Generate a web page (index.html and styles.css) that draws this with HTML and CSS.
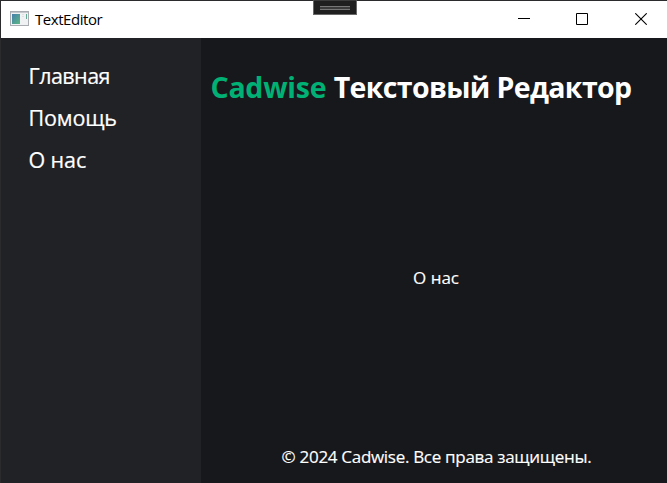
FILE: index.html
```
<!DOCTYPE html>
<html lang="ru">
<head>
<meta charset="utf-8">
<title>TextEditor</title>
<link rel="stylesheet" href="styles.css">
</head>
<body>
<div class="window">
  <header class="titlebar">
    <svg class="app-icon" width="20" height="16" viewBox="0 0 20 16">
      <defs><linearGradient id="g" x1="0" y1="0" x2="1" y2="1"><stop offset="0" stop-color="#477fae"/><stop offset="1" stop-color="#5bb880"/></linearGradient></defs>
      <rect x=".5" y=".5" width="18" height="14" fill="#f0f1f3" stroke="#a9adb2"/>
      <path d="M1 1.5h17" stroke="#c5c9ce"/>
      <rect x="2" y="3" width="8" height="10" fill="url(#g)"/>
      <path d="M12 3.5h2M12 5.5h2" stroke="#dfe2e5"/>
      <rect x="16" y="3" width="1" height="5" fill="#66a995"/>
    </svg>
    <span class="app-name">TextEditor</span>
    <div class="controls">
      <svg width="12" height="12" viewBox="0 0 12 12"><path d="M0 5.5h12"/></svg>
      <svg width="12" height="12" viewBox="0 0 12 12"><path d="M.5.5h11v11H.5z"/></svg>
      <svg width="12" height="12" viewBox="0 0 12 12"><path class="cross" d="M.3.3l11.4 11.4M11.7.3L.3 11.7"/></svg>
    </div>
    <div class="grip"><i></i></div>
  </header>
  <div class="body">
    <nav class="sidebar">
      <a class="home">Главная</a>
      <a class="help">Помощь</a>
      <a class="about">О нас</a>
    </nav>
    <main class="content">
      <h1><span class="brand">Cadwise</span> <span class="product">Текстовый Редактор</span></h1>
      <p class="page">О нас</p>
      <footer>© 2024 Cadwise. Все права защищены.</footer>
    </main>
  </div>
</div>
</body>
</html>
```
FILE: styles.css
```
* { box-sizing: border-box; }
body {
  margin: 0;
  font-family: "Open Sans", "Noto Sans", sans-serif;
  color: #fff;
  overflow: hidden;
}
.window {
  height: 483px;
  display: flex;
  flex-direction: column;
  border-top: 1px solid #2b2b2d;
  border-left: 1px solid #2b2b2d;
  background: #17181c;
}
.titlebar {
  position: relative;
  height: 37px;
  flex: none;
  display: flex;
  align-items: center;
  padding: 0 20px 0 9px;
  background: #fff;
  color: #000;
}
.app-icon { margin-top: -1px; }
.app-name { margin: -2px 0 0 5px; font-size: 15px; line-height: 20px; letter-spacing: -0.45px; }
.controls { display: flex; gap: 46px; margin: -1px 0 0 auto; }
.controls svg { fill: none; stroke: #000; stroke-width: 1; }
.controls svg:not(:last-child) { margin-left: -1px; margin-right: 1px; }
.controls .cross { stroke-width: 1.1; }
.grip {
  position: absolute;
  left: 312px;
  top: -1px;
  width: 44px;
  height: 15px;
  padding: 6px 6px 0;
  background: #1f1f1f;
  border: 1px solid #686868;
  border-top-color: #3a3a3a;
}
.grip i { display: block; height: 4px; margin-top: -1px; border: solid #777; border-width: 1px 0; background: #3c3c3c; }
.body { flex: 1; display: flex; min-height: 0; }
.sidebar {
  width: 200px;
  padding: 17px 0 0 27.5px;
  background: #212226;
  font-size: 21.5px;
  -webkit-text-stroke: 0.2px #fff;
}
.sidebar a { display: block; height: 42px; line-height: 42px; white-space: nowrap; }
.home { letter-spacing: -0.55px; }
.help { letter-spacing: -0.15px; }
.about { letter-spacing: -0.1px; }
.content {
  flex: 1;
  display: flex;
  flex-direction: column;
  white-space: nowrap;
  font-size: 17px;
}
h1 { margin: 29px 0 0 9.5px; font-size: 28.5px; line-height: 40px; font-weight: 700; }
.brand { color: #00b074; letter-spacing: -0.25px; }
.product { letter-spacing: -0.63px; }
.page { margin: 159px 0 0 4px; text-align: center; line-height: 24px; -webkit-text-stroke: 0.15px #fff; }
footer { margin: auto 0 14px 5px; text-align: center; line-height: 24px; letter-spacing: -0.3px; -webkit-text-stroke: 0.15px #fff; }
```
